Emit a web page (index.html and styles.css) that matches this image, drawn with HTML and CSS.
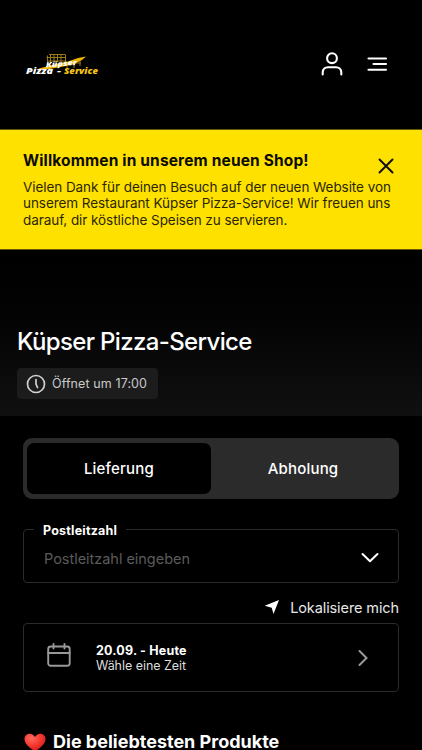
FILE: index.html
```html
<!DOCTYPE html>
<html lang="de">
<head>
<meta charset="utf-8">
<meta name="viewport" content="width=device-width, initial-scale=1">
<title>Küpser Pizza-Service</title>
<link rel="stylesheet" href="styles.css">
</head>
<body>
<header class="header">
  <svg class="logo" width="78" height="30" viewBox="0 0 78 30">
    <g fill="none" stroke="#9a7a12" stroke-width="1">
      <path d="M23.500 16V5.500M26.500 12V4.500M30 12V5M33.500 12V5M37 12V5M41.500 14V4.500M22.500 7.500H42M24 11H42M25 4.500H41"/>
      <path d="M43 12V18M50 11V18M56 9V16M43 13H57"/>
    </g>
    <path fill="#efb400" d="M15 18.500 30 14.500 44 11.500 54 8 62 6.500 58 10 49 14.500 37 17 25 19 15 20Z"/>
    <text class="logo-name" x="22" y="17.500" textLength="31" lengthAdjust="spacingAndGlyphs" transform="rotate(-5 22 17)">Küpser</text>
    <text class="logo-text" x="2" y="23.500" textLength="27" lengthAdjust="spacingAndGlyphs">Pizza</text>
    <text class="logo-text" x="33" y="23.500" textLength="4" lengthAdjust="spacingAndGlyphs">-</text>
    <text class="logo-text logo-gold" x="40" y="23.500" textLength="34" lengthAdjust="spacingAndGlyphs">Service</text>
  </svg>
  <nav class="actions">
    <svg width="24" height="26" viewBox="0 0 24 26"><circle cx="12" cy="7.200" r="4.900"/><path d="M2.700 23.500V21.500C2.700 18 5.200 16.200 8 16.200H16C18.800 16.200 21.300 18 21.300 21.500V23.500"/></svg>
    <svg width="24" height="26" viewBox="0 0 24 26"><path d="M3.500 7.500H21M8.500 13H21M3.500 18.700H21"/></svg>
  </nav>
</header>
<section class="notice">
  <h2>Willkommen in unserem neuen Shop!</h2>
  <p>Vielen Dank für deinen Besuch auf der neuen Website von<br>unserem Restaurant Küpser Pizza-Service! Wir freuen uns<br>darauf, dir köstliche Speisen zu servieren.</p>
  <svg class="close" width="18" height="18" viewBox="0 0 18 18"><path d="M2.500 2.500 15.500 15.500M15.500 2.500 2.500 15.500"/></svg>
</section>
<section class="hero">
  <h1>Küpser Pizza-Service</h1>
  <div class="status">
    <svg width="20" height="20" viewBox="0 0 20 20"><circle cx="10" cy="10" r="8.500"/><path d="M10 5.500V10L11.500 13.500"/></svg>
    <span>Öffnet um 17:00</span>
  </div>
</section>
<main class="order">
  <div class="tabs">
    <div class="tab active"><span>Lieferung</span></div>
    <div class="tab"><span>Abholung</span></div>
  </div>
  <fieldset class="zip">
    <legend>Postleitzahl</legend>
    <div class="zip-row">
      <span>Postleitzahl eingeben</span>
      <svg width="20" height="12" viewBox="0 0 20 12"><path d="M2.500 2 10 9.300 17.500 2"/></svg>
    </div>
  </fieldset>
  <div class="locate">
    <svg width="16" height="16" viewBox="0 0 16 16"><path d="M.7 6.700 15 1 9.500 15 7.700 8.700Z"/></svg>
    <span>Lokalisiere mich</span>
  </div>
  <div class="time">
    <svg class="calendar" width="24" height="24" viewBox="0 0 24 24"><rect x="1.200" y="3.500" width="21.500" height="19.300" rx="2.500"/><path d="M1.200 10H22.700M6.500 1V5.500M17.500 1V5.500"/></svg>
    <div class="time-text"><strong>20.09. - Heute</strong><span>Wähle eine Zeit</span></div>
    <svg class="next" width="12" height="18" viewBox="0 0 12 18"><path d="M2.500 2 9.500 9 2.500 16"/></svg>
  </div>
  <h2 class="popular">
    <svg width="22" height="19" viewBox="0 0 22 19">
      <defs><radialGradient id="heart" cx=".35" cy=".25" r=".85"><stop offset="0" stop-color="#ff695f"/><stop offset=".5" stop-color="#f5382f"/><stop offset="1" stop-color="#c9141a"/></radialGradient></defs>
      <path fill="url(#heart)" d="M11 18.500C7 15.500.5 11.500.5 6 .5 2.800 2.800.7 5.700.7 8 .7 10 2 11 4 12 2 14 .7 16.300.7 19.200.7 21.500 2.800 21.500 6 21.500 11.500 15 15.500 11 18.500Z"/>
    </svg>
    <span>Die beliebtesten Produkte</span>
  </h2>
</main>
</body>
</html>
```
FILE: styles.css
```css
* { box-sizing: border-box; margin: 0; }
body {
  height: 750px;
  overflow: hidden;
  background: #000;
  color: #fff;
  font-family: Inter, "Liberation Sans", sans-serif;
}
svg { display: block; flex: none; }
h1, h2, p, span, strong { white-space: nowrap; }
.header {
  height: 129px;
  padding: 0 33px 0 24px;
  display: flex;
  align-items: center;
  justify-content: space-between;
}
.logo-text, .logo-name {
  font: italic 800 8px "Open Sans", sans-serif;
  fill: #fff;
}
.logo-name { font-size: 7px; }
.logo-text.logo-gold { fill: #f5c518; }
.actions { display: flex; gap: 21px; margin-top: -1px; }
.actions svg { fill: none; stroke: #fff; stroke-width: 2.100; stroke-linecap: round; }
.notice {
  position: relative;
  height: 121px;
  padding: 21px 23px 0;
  background: #ffe100;
  border-top: 1px solid #665a00;
  border-bottom: 1px solid #665a00;
  color: #0c0b00;
}
.notice h2 { font-size: 15.500px; line-height: 19px; font-weight: 700; letter-spacing: .15px; }
.notice p { margin-top: 9px; font-size: 13.500px; line-height: 16.300px; letter-spacing: -.065px; color: #2b2600; }
.close {
  position: absolute;
  top: 27px;
  right: 27px;
  fill: none;
  stroke: #111;
  stroke-width: 2;
  stroke-linecap: round;
}
.hero {
  height: 166px;
  padding: 76px 17px 0;
  background: linear-gradient(#000, #030303 40%, #101010);
}
.hero h1 { font-size: 24px; line-height: 32px; font-weight: 500; letter-spacing: -.65px; }
.status {
  width: 141px;
  height: 31px;
  margin-top: 10px;
  padding-left: 9px;
  display: flex;
  align-items: center;
  gap: 6px;
  border-radius: 4px;
  background: #1c1c1c;
  color: #c9c9c9;
  font-size: 12.500px;
  letter-spacing: .1px;
}
.status svg { fill: none; stroke: #d0d0d0; stroke-width: 1.700; stroke-linecap: round; }
.order { padding: 22px 23px 0; }
.tabs {
  height: 61px;
  padding: 5px 4px;
  display: grid;
  grid-template-columns: 1fr 1fr;
  border-radius: 9px;
  background: #2b2b2b;
}
.tab {
  display: flex;
  align-items: center;
  justify-content: center;
  border-radius: 7px;
  font-size: 15px;
  font-weight: 500;
  letter-spacing: .2px;
}
.tab.active { background: #000; }
.zip {
  height: 62px;
  min-width: 0;
  margin-top: 22px;
  padding: 0 18px 0 10px;
  border: 1px solid #2b2b2b;
  border-radius: 4px;
}
.zip legend {
  height: 16px;
  padding: 2px 9px 0;
  font-size: 12.500px;
  line-height: 16px;
  font-weight: 700;
  letter-spacing: .2px;
}
.zip-row {
  height: 42px;
  padding-left: 10px;
  display: flex;
  align-items: center;
  justify-content: space-between;
  color: #5b5b5b;
  font-size: 14.500px;
  letter-spacing: -.03px;
}
.zip svg { fill: none; stroke: #fff; stroke-width: 2; stroke-linecap: round; stroke-linejoin: round; }
.locate {
  height: 40px;
  padding-top: 9px;
  display: flex;
  align-items: center;
  justify-content: flex-end;
  gap: 10px;
  font-size: 14.500px;
  letter-spacing: -.1px;
  color: #e8e8e8;
}
.locate svg { fill: #fff; margin-top: -2px; }
.time {
  height: 69px;
  padding: 0 29px 0 23px;
  display: flex;
  align-items: center;
  border: 1px solid #2b2b2b;
  border-radius: 4px;
}
.time svg { fill: none; stroke: #999; stroke-width: 1.900; stroke-linecap: round; }
.time .calendar { margin-top: -5px; }
.time-text {
  margin-left: 25px;
  display: flex;
  flex-direction: column;
  font-size: 12.500px;
  line-height: 15px;
}
.time-text strong { letter-spacing: .2px; }
.time-text span { color: #ddd; letter-spacing: -.04px; }
.time .next { margin-left: auto; stroke-width: 2; }
.popular {
  margin-top: 38px;
  padding-left: 1px;
  display: flex;
  align-items: center;
  gap: 7px;
  font-size: 18px;
  line-height: 24px;
  font-weight: 700;
}
```
